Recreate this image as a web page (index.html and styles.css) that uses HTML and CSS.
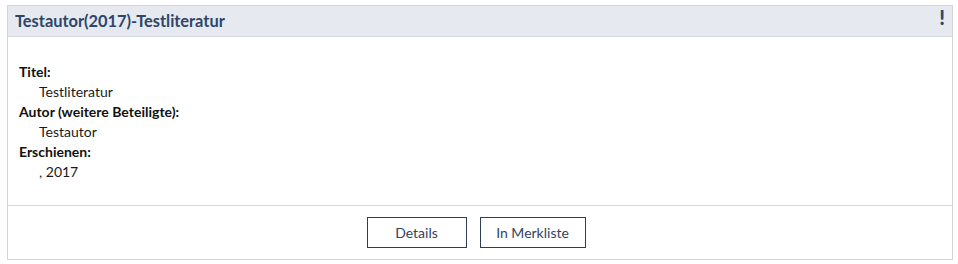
FILE: index.html
```html
<!DOCTYPE html>
<html lang="de">
<head>
<meta charset="utf-8">
<link rel="stylesheet" href="styles.css">
</head>
<body>
<div class="card">
  <div class="card-head">
    <h2 class="card-title">Testautor(2017)-Testliteratur</h2>
    <span class="flag">!</span>
  </div>
  <div class="card-body">
    <dl class="meta">
      <dt>Titel:</dt>
      <dd>Testliteratur</dd>
      <dt>Autor (weitere Beteiligte):</dt>
      <dd>Testautor</dd>
      <dt>Erschienen:</dt>
      <dd>, 2017</dd>
    </dl>
  </div>
  <div class="card-foot">
    <button class="btn btn-details">Details</button>
    <button class="btn btn-merk">In Merkliste</button>
  </div>
</div>
</body>
</html>
```
FILE: styles.css
```css
html, body {
  margin: 0;
  padding: 0;
  background: #ffffff;
}
body {
  padding: 5px 5px 0 7px;
  font-family: Lato, "Liberation Sans", sans-serif;
  color: #1a1a1a;
}
.card {
  border: 1px solid #d4d4d8;
  box-sizing: border-box;
  width: 946px;
  height: 255px;
  display: flex;
  flex-direction: column;
}
.card-head {
  background: #e7e9f1;
  border-bottom: 1px solid #d6d8e0;
  height: 30px;
  display: flex;
  align-items: center;
  justify-content: space-between;
  padding: 0 7px 0 7px;
}
.card-title {
  margin: 0;
  font-size: 16.4px;
  font-weight: bold;
  color: #2c4669;
  line-height: 30px;
}
.flag {
  font-weight: 900;
  font-size: 20px;
  color: #2c4669;
  align-self: flex-start;
  line-height: 22px;
}
.card-body {
  flex: 1;
  padding: 25px 11px 0 11px;
}
.meta {
  margin: 0;
  font-size: 14px;
  line-height: 20px;
}
.meta dt {
  font-weight: bold;
  color: #111;
}
.meta dd {
  margin: 0 0 0 20px;
  color: #1a1a1a;
}
.card-foot {
  border-top: 1px solid #d6d6da;
  height: 54px;
  box-sizing: border-box;
  display: flex;
  justify-content: center;
  align-items: center;
  gap: 13px;
  padding: 0 8px 1px 0;
}
.btn {
  font-family: Lato, "Liberation Sans", sans-serif;
  font-size: 14px;
  color: #33445e;
  background: #ffffff;
  border: 1px solid #2c3e58;
  height: 31px;
  padding: 0;
  border-radius: 0;
}
.btn-details {
  width: 100px;
}
.btn-merk {
  width: 106px;
}
```
